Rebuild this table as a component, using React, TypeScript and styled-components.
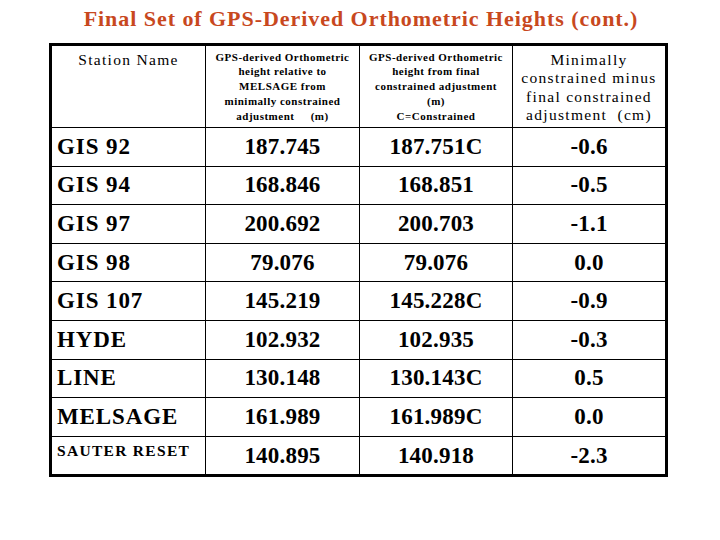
import React from 'react'
import styled, { createGlobalStyle } from 'styled-components'

const GlobalStyle = createGlobalStyle`
	html, body {
		margin: 0;
		padding: 0;
		background: #ffffff;
	}
	body {
		font-family: 'Liberation Serif', 'Times New Roman', serif;
		color: #000;
	}
`

type Row = {
	name: string
	min: string
	final: string
	diff: string
	small?: boolean
}

const rows: Row[] = [
	{ name: 'GIS 92', min: '187.745', final: '187.751C', diff: '-0.6' },
	{ name: 'GIS 94', min: '168.846', final: '168.851', diff: '-0.5' },
	{ name: 'GIS 97', min: '200.692', final: '200.703', diff: '-1.1' },
	{ name: 'GIS 98', min: '79.076', final: '79.076', diff: '0.0' },
	{ name: 'GIS 107', min: '145.219', final: '145.228C', diff: '-0.9' },
	{ name: 'HYDE', min: '102.932', final: '102.935', diff: '-0.3' },
	{ name: 'LINE', min: '130.148', final: '130.143C', diff: '0.5' },
	{ name: 'MELSAGE', min: '161.989', final: '161.989C', diff: '0.0' },
	{ name: 'SAUTER RESET', min: '140.895', final: '140.918', diff: '-2.3', small: true },
]

export default function App() {
	return (
		<Page>
			<GlobalStyle />
			<Title>Final Set of GPS-Derived Orthometric Heights (cont.)</Title>
			<Table>
				<colgroup>
					<col style={{ width: 155 }} />
					<col style={{ width: 154 }} />
					<col style={{ width: 153 }} />
					<col style={{ width: 154 }} />
				</colgroup>
				<thead>
					<tr>
						<HeadCell $top>Station Name</HeadCell>
						<SmallHead>
							GPS-derived Orthometric
							<br />
							height relative to
							<br />
							MELSAGE from
							<br />
							minimally constrained
							<br />
							adjustment&nbsp;&nbsp;&nbsp;&nbsp;&nbsp;(m)
						</SmallHead>
						<SmallHead>
							GPS-derived Orthometric
							<br />
							height from final
							<br />
							constrained adjustment
							<br />
							(m)
							<br />
							C=Constrained
						</SmallHead>
						<HeadCell>
							Minimally
							<br />
							constrained minus
							<br />
							final constrained
							<br />
							adjustment&nbsp; (cm)
						</HeadCell>
					</tr>
				</thead>
				<tbody>
					{rows.map((r) => (
						<tr key={r.name}>
							<NameCell $small={r.small}>{r.name}</NameCell>
							<ValueCell>{r.min}</ValueCell>
							<ValueCell>{r.final}</ValueCell>
							<ValueCell>{r.diff}</ValueCell>
						</tr>
					))}
				</tbody>
			</Table>
		</Page>
	)
}

const Page = styled.div`
	width: 720px;
	height: 540px;
	display: flex;
	flex-direction: column;
	align-items: center;
	overflow: hidden;
`

const Title = styled.h1`
	margin: 5px 0 0;
	height: 38px;
	font-family: 'Liberation Serif', 'Times New Roman', serif;
	font-size: 22px;
	font-weight: bold;
	color: #c8481e;
	line-height: 28px;
	letter-spacing: 0.95px;
	padding-left: 2px;
	white-space: nowrap;
`

const Table = styled.table`
	border-collapse: collapse;
	border: 3px solid #000;
	margin-left: -3px;
	table-layout: fixed;
	width: 619px;
`

const HeadCell = styled.th<{ $top?: boolean }>`
	border: 1px solid #000;
	height: ${(p) => (p.$top ? '76px' : '79px')};
	padding: 0 1px;
	padding-top: ${(p) => (p.$top ? '5px' : '2px')};
	font-size: 15.5px;
	font-weight: normal;
	line-height: 18.4px;
	letter-spacing: 1.3px;
	text-align: center;
	vertical-align: ${(p) => (p.$top ? 'top' : 'middle')};
	white-space: nowrap;
`

const SmallHead = styled.th`
	border: 1px solid #000;
	padding: 0 1px;
	font-size: 11px;
	font-weight: bold;
	line-height: 14.8px;
	letter-spacing: 0.5px;
	text-align: center;
	vertical-align: middle;
	white-space: nowrap;
`

const NameCell = styled.td<{ $small?: boolean }>`
	border: 1px solid #000;
	height: ${(p) => (p.$small ? '32.6px' : '37.6px')};
	padding: ${(p) => (p.$small ? '5px 5px 0' : '0 5px')};
	font-size: ${(p) => (p.$small ? '15.5px' : '23px')};
	font-weight: bold;
	letter-spacing: ${(p) => (p.$small ? '1.3px' : '0.9px')};
	text-align: left;
	vertical-align: ${(p) => (p.$small ? 'top' : 'middle')};
	white-space: nowrap;
`

const ValueCell = styled.td`
	border: 1px solid #000;
	height: 37.6px;
	padding: 0;
	font-size: 23px;
	font-weight: bold;
	letter-spacing: 0.2px;
	text-align: center;
	vertical-align: middle;
`
